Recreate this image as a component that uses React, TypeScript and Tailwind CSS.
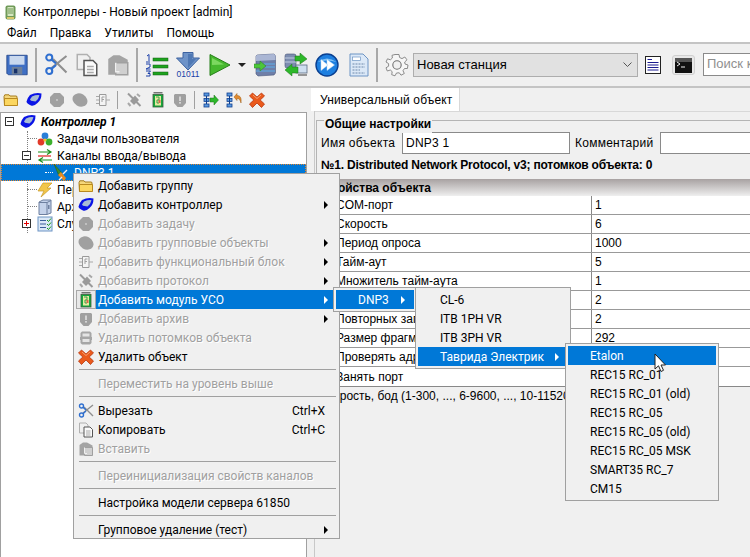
import type { ReactNode } from 'react';

const ui = 'font-["Roboto","Noto_Sans",sans-serif]';

const Svg = ({ size = 16, children, className = '' }: { size?: number; children: ReactNode; className?: string }) => (
  <svg width={size} height={size} viewBox="0 0 16 16" className={`shrink-0 ${className}`}>{children}</svg>
);

const FolderIcon = () => (
  <Svg>
    <path d="M1 4.5 L1.8 2.8 H6 L7 4 H13.5 L14 5 V13.5 H1.5 Z" fill="#f4d67a" stroke="#a67c1e" />
    <path d="M1.5 6.5 H14.5 V13.5 H1.5 Z" fill="#fbd65f" stroke="#b8891f" />
  </Svg>
);
const ControllerIcon = ({ size = 16 }: { size?: number }) => (
  <Svg size={size}>
    <path d="M4 3 Q10 0 15.5 1.5 Q15.5 8 11.5 11 Q8 14.5 5 13.5 Q0.5 11.5 0.5 9.5 Q2 5 4 3 Z" fill="#0a14e6" />
    <path d="M6 4.5 Q10 2.8 13.5 3.2 Q12.5 7.5 9.5 9.5 L5 8.8 L4 7.5 Z" fill="#a8bcd4" />
  </Svg>
);
const GrayBlob = ({ wide = false }: { wide?: boolean }) => (
  <Svg>
    {wide ? <ellipse cx="8" cy="8" rx="7.8" ry="6.3" fill="#a0a0a0" transform="rotate(30 8 8)" /> : <path d="M5 1 H11 L15 5 V11 L11 15 H5 L1 11 V5 Z" fill="#a0a0a0" />}
    {!wide && <circle cx="8" cy="8" r="0.9" fill="#d0d0d0" />}
  </Svg>
);
const BlockIcon = () => (
  <Svg>
    <path d="M4.5 2.5 H11 V13.5 H4.5 Z" fill="#f4f4f4" stroke="#9a9a9a" />
    <path d="M1 4.5 H4 M1 8 H4 M1 11.5 H4 M11 8 H15" stroke="#a8a8a8" />
    <path d="M7 5 H9.5 M7 5 V10 M7 7.5 H9" stroke="#a0a0a0" />
  </Svg>
);
const ProtocolGray = () => (
  <Svg>
    <path d="M2 1.5 L14.5 14" stroke="#9a9a9a" strokeWidth="2" />
    <path d="M4 9 L9 3.5 L13 8 L8 13 Z" fill="#9a9a9a" />
    <path d="M11 2 L14 4.5 M2 11 L4.5 14" stroke="#a8a8a8" strokeWidth="2" />
  </Svg>
);
const ModuleIcon = () => (
  <Svg>
    <path d="M3.5 0.8 H12.5" stroke="#555" strokeWidth="1.2" />
    <rect x="3" y="2.5" width="10" height="12.5" fill="#14a83c" stroke="#3c5c3c" strokeWidth="0.8" />
    <rect x="5" y="4" width="6" height="9.5" fill="#e8e8a0" />
    <path d="M6 5 H9 V8 H7 V11 H9" stroke="#3aa04a" fill="none" />
    <rect x="8.5" y="8" width="2" height="3" fill="#d46a4a" />
  </Svg>
);
const ShieldGray = () => (
  <Svg>
    <path d="M3 2 H13 L14 3 V11 L10.5 15 H5.5 L2 11 V3 Z" fill="#a0a0a0" />
    <rect x="7.2" y="4.5" width="1.6" height="4.5" fill="#e2e2e2" />
    <rect x="7.2" y="10" width="1.6" height="1.6" fill="#e2e2e2" />
  </Svg>
);
const DeleteChildrenGray = () => (
  <Svg>
    <path d="M4 1.5 H12 L13.5 3 V7 H14 V10 H13.5 V13 L12 14.5 H4 L2.5 13 V10 H2 V7 H2.5 V3 Z" fill="#a6a6a6" />
    <rect x="4.5" y="3.5" width="7" height="3" fill="#e4e4e4" />
    <rect x="4.5" y="9" width="7" height="3" fill="#e4e4e4" />
  </Svg>
);
const CrossIcon = ({ size = 16 }: { size?: number }) => (
  <Svg size={size}>
    <path d="M3.5 1 L8 5 L12.5 1 L15.5 4 L11.2 8 L15.5 12 L12.5 15.5 L8 11 L3.5 15.5 L0.5 12 L4.8 8 L0.5 4 Z" fill="#ea5a1c" stroke="#b8360c" strokeWidth="0.8" />
    <path d="M4 3 L8 6.5 L12 3" fill="none" stroke="#f7a070" />
  </Svg>
);
const ScissorsIcon = ({ size = 16 }: { size?: number }) => (
  <Svg size={size}>
    <path d="M15 2 L5 10 M15 13 L6 4" stroke="#8f8f8f" strokeWidth="1.4" />
    <circle cx="3.5" cy="3" r="2" fill="none" stroke="#2f6fd0" strokeWidth="1.4" />
    <circle cx="3.5" cy="12" r="2" fill="none" stroke="#2f6fd0" strokeWidth="1.4" />
    <path d="M5 4.3 L8 7 M5 10.7 L8 8" stroke="#2f6fd0" strokeWidth="1.4" />
  </Svg>
);
const CopyIcon = ({ size = 16 }: { size?: number }) => (
  <Svg size={size}>
    <path d="M1.5 1 H8 L10 3 V11 H1.5 Z" fill="#f0f0f0" stroke="#b0b0b0" />
    <path d="M6 5 H12 L14.5 7.5 V15 H6 Z" fill="#fafafa" stroke="#555" />
    <path d="M8 9 H12.5 M8 11 H12.5 M8 13 H12.5" stroke="#aaa" />
  </Svg>
);
const PasteGray = ({ size = 16 }: { size?: number }) => (
  <Svg size={size}>
    <path d="M1.5 14.5 V4 L5 1.5 H9 L14.5 4.5 V14.5 Z" fill="#a4a4a4" />
    <path d="M6.5 6.5 H14.5 V14.5 H6.5 Z" fill="#d0d0d0" stroke="#a0a0a0" />
    <path d="M6.5 6.5 V12.5 H9" fill="none" stroke="#f0f0f0" />
  </Svg>
);
const SaveIcon = () => (
  <Svg size={24}>
    <path d="M1.2 1.5 H14.8 V14.5 H2.2 L1.2 13.5 Z" fill="#3f6fc4" stroke="#1f3f80" strokeWidth="0.5" />
    <rect x="3" y="2" width="10" height="5.8" fill="#c9d8ee" />
    <rect x="4.5" y="9.3" width="7" height="5" fill="#6d7f99" />
    <rect x="6" y="10.5" width="2.2" height="3" fill="#16306a" />
  </Svg>
);
const NumberedIcon = () => (
  <svg width="24" height="24" viewBox="0 0 24 24" className="shrink-0">
    <rect x="8" y="5" width="15" height="3" fill="#1ea31e" stroke="#135c13" strokeWidth="0.5" />
    <rect x="8" y="12" width="15" height="3" fill="#1ea31e" stroke="#135c13" strokeWidth="0.5" />
    <rect x="8" y="19" width="15" height="3" fill="#1ea31e" stroke="#135c13" strokeWidth="0.5" />
    <path d="M2 3 L4 1.5 V8 M1 9 H5 M1 11 H5 V14 L1 16 H5.5 M1 18 H5.5 L3 20.5 H5 V23 H1" fill="none" stroke="#1a3fa8" strokeWidth="1" />
  </svg>
);
const DownloadIcon = () => (
  <svg width="26" height="26" viewBox="0 0 26 26" className="shrink-0">
    <path d="M8 0.5 H18 V6 H24.5 L13 18 L1.5 6 H8 Z" fill="#6e93c8" stroke="#3c62a0" />
    <path d="M13 2 H17 V7 H21 L13 16 Z" fill="#4f78b4" />
    <text x="13" y="25" textAnchor="middle" fontSize="8.5" fill="#1a3fa8" fontFamily="Liberation Sans, sans-serif">01011</text>
  </svg>
);
const PlayIcon = () => (
  <svg width="22" height="24" viewBox="0 0 22 24" className="shrink-0">
    <path d="M1 1.5 L21 12 L1 22.5 Z" fill="#46b82e" stroke="#27801a" />
    <path d="M3 5 L15 11.5 L3 12 Z" fill="#7cd860" />
  </svg>
);
const DatabaseArrow = () => (
  <svg width="22" height="24" viewBox="0 0 22 24" className="shrink-0">
    <path d="M3 2 L20 1 L21.5 3 V20 L20 22 L4 23 L2 21 V3 Z" fill="#6f7fa8" stroke="#4a5578" strokeWidth="0.6" />
    <path d="M3 2 L20 1 L21.5 3 V7 L2 8 V3 Z" fill="#aab6d4" />
    <path d="M10 11 H21 M10 14 H21 M2 18 H21" stroke="#5fb0ea" />
    <path d="M0 11 H6 V8 L12 13 L6 18 V15 H0 Z" fill="#4cc63a" stroke="#2a7d20" strokeWidth="0.5" />
  </svg>
);
const SyncIcon = () => (
  <svg width="24" height="25" viewBox="0 0 24 25" className="shrink-0">
    <rect x="1" y="1" width="11" height="14" rx="2" fill="#7d8db0" stroke="#4a5578" strokeWidth="0.6" />
    <path d="M1 5 H12 M1 9 H12" stroke="#c2cde2" />
    <rect x="12" y="12" width="11" height="8" fill="#cfdff0" stroke="#5a6a80" strokeWidth="0.8" />
    <path d="M14 22 H23" stroke="#777" strokeWidth="1.5" />
    <path d="M11 3 H16 L16 0 L23 6 L16 11 V8 H11 Z" fill="#2db82a" stroke="#1c701a" strokeWidth="0.5" />
    <path d="M14 14 H8 V11 L1 17 L8 23 V20 H14 Z" fill="#2db82a" stroke="#1c701a" strokeWidth="0.5" />
  </svg>
);
const ForwardIcon = () => (
  <svg width="24" height="24" viewBox="0 0 24 24" className="shrink-0">
    <circle cx="12" cy="12" r="11" fill="#1d7fe0" stroke="#0a3f90" strokeWidth="1.4" />
    <path d="M2.5 9 Q12 2 21.5 9 Q12 6 2.5 9" fill="#7fc0f5" />
    <path d="M6 6.5 L13 12 L6 17.5 Z M12 6.5 L19.5 12 L12 17.5 Z" fill="#fff" stroke="#bcdcf6" strokeWidth="0.5" />
  </svg>
);
const DocIcon = () => (
  <svg width="20" height="24" viewBox="0 0 20 24" className="shrink-0">
    <path d="M1 1 H14 L19 6 V23 H1 Z" fill="#dbe8f7" stroke="#6d94c4" />
    <rect x="3.5" y="4" width="8" height="3.5" fill="#fff" stroke="#6d94c4" strokeWidth="0.7" />
    <path d="M3.5 11 H16 M3.5 14 H16 M3.5 17 H11 M3.5 20 H16" stroke="#6d88aa" strokeDasharray="2 1" />
  </svg>
);
const GearIcon = () => (
  <svg width="24" height="24" viewBox="0 0 24 24" className="shrink-0">
    <path d="M10 1.5 H14 L14.6 4.5 L17 5.6 L19.8 4 L22 6.8 L19.7 9 L20 11 L23 12 L22.4 15.5 L19.5 15.5 L18 17.7 L19.3 20.5 L16 22.2 L14.3 19.8 L11.5 20 L10 22.8 L6.7 21.7 L7.2 18.7 L5.3 17 L2.3 18 L1 14.8 L3.6 13.2 L3.6 10.6 L1 9 L2.5 5.8 L5.4 6.8 L7.4 5 L7 2.3 Z" fill="#f6f6f6" stroke="#808080" strokeWidth="0.9" />
    <circle cx="12" cy="12" r="4.2" fill="#f0f0f0" stroke="#707070" strokeWidth="1.1" />
  </svg>
);
const ListDocIcon = () => (
  <svg width="16" height="18" viewBox="0 0 16 18" className="shrink-0">
    <rect x="0.5" y="0.5" width="15" height="17" fill="#fff" stroke="#222" />
    <path d="M2.5 3.5 H7 M2.5 6.5 H13.5 M2.5 9 H13.5 M2.5 11.5 H13.5 M2.5 14 H13.5" stroke="#1a1a90" strokeWidth="1.2" />
  </svg>
);
const TerminalIcon = () => (
  <div className="flex h-[20px] w-[23px] shrink-0 items-center justify-center rounded-[3px] border border-[#d0d0d0] bg-[#e8e8e8]">
    <svg width="17" height="15" viewBox="0 0 17 15">
      <rect width="17" height="15" fill="#111" />
      <rect width="17" height="4" fill="#555" />
      <path d="M2 4 L5 6 L2 8 M6 9 H10" fill="none" stroke="#eee" />
    </svg>
  </div>
);
const TreeGo = ({ back = false }: { back?: boolean }) => (
  <Svg>
    <rect x="1" y="1" width="5" height="3" fill="#5a9ae0" stroke="#103f90" strokeWidth="0.8" />
    <rect x="1" y="6.5" width="5" height="3" fill="#5a9ae0" stroke="#103f90" strokeWidth="0.8" />
    <rect x="1" y="12" width="5" height="3" fill="#5a9ae0" stroke="#103f90" strokeWidth="0.8" />
    <path d="M3.5 4 V12" stroke="#103f90" />
    {back ? (
      <path d="M8 5 L11 1.5 V3.5 C15 3.5 15.5 7 15 11 C14 7.5 13 6.5 11 6.5 V8.5 Z" fill="#e08a30" stroke="#9a5a14" strokeWidth="0.5" />
    ) : (
      <path d="M7 6 H11 V3 L15.5 8 L11 13 V10 H7 Z" fill="#2db82a" stroke="#1c701a" strokeWidth="0.5" />
    )}
  </Svg>
);
const TasksIcon = () => (
  <Svg>
    <circle cx="8" cy="5" r="3.4" fill="#2a7fd8" />
    <circle cx="4" cy="11" r="3.4" fill="#e23a2a" />
    <circle cx="12" cy="11" r="3.4" fill="#3cb02c" />
    <circle cx="8" cy="9" r="1.6" fill="#f0c030" />
  </Svg>
);
const ChannelsIcon = () => (
  <Svg>
    <path d="M1 4 H14 M10 1.5 L14 4 L10 6.5" fill="none" stroke="#1b8f1b" strokeWidth="1.2" />
    <path d="M1 8 H14" stroke="#e02020" strokeWidth="1.2" />
    <path d="M15 12 H2 M6 9.5 L2 12 L6 14.5" fill="none" stroke="#1b8f1b" strokeWidth="1.2" />
  </Svg>
);
const PlugIcon = () => (
  <svg width="18" height="18" viewBox="0 0 18 18" className="shrink-0">
    <path d="M1 0 L9 9 L6 12 Z" fill="#3f8a2e" stroke="#1f5a1a" strokeWidth="0.5" />
    <path d="M8 8 L13 14 L11 17 L5 11 Z" fill="#e88a1e" />
    <path d="M14 6 L10 10 M6 16 L9 13" stroke="#f0f0f0" strokeWidth="1.4" />
  </svg>
);
const BoltIcon = () => (
  <Svg>
    <path d="M6 1 H15 L10 6 H14 L4 15 L7 9 H1 Z" fill="#f2c64a" stroke="#c79a28" strokeWidth="0.7" />
  </Svg>
);
const ArchiveIcon = () => (
  <Svg>
    <path d="M2 3 L6 1 H14 V14 L10 15.5 H2 Z" fill="#c4d2ea" stroke="#6d7f9f" />
    <path d="M10 3.5 V15 M10 3.5 L2 3.5 M10 3.5 L14 1.5" stroke="#6d7f9f" />
    <rect x="11" y="6" width="1.5" height="4" fill="#6d7f9f" />
  </Svg>
);
const ChecklistIcon = () => (
  <Svg>
    <rect x="1" y="1" width="14" height="14" fill="#dbe8f7" stroke="#6d94c4" />
    <path d="M3 4.5 H9 M3 8 H9 M3 11.5 H9" stroke="#3a5f9a" />
    <path d="M10 4 L11.5 5.5 L14 2.5 M10 8 L11.5 9.5 L14 6.5 M10 12 L11.5 13.5 L14 10.5" fill="none" stroke="#1b9a1b" />
  </Svg>
);

const VDivider = ({ h }: { h: string }) => <div className={`mx-[1px] w-[2px] shrink-0 bg-[#a8a8a8] ${h}`} />;

const TreeBox = ({ open }: { open: boolean }) => (
  <span className="relative block h-[9px] w-[9px] shrink-0 border border-[#333] bg-white">
    <span className={`absolute left-[1px] top-[3px] h-[1px] w-[5px] ${open ? 'bg-[#333]' : 'bg-[#e00000]'}`} />
    {!open && <span className="absolute left-[3px] top-[1px] h-[5px] w-[1px] bg-[#e00000]" />}
  </span>
);

const Dots = ({ w, light = false }: { w: string; light?: boolean }) => (
  <span className={`block h-0 shrink-0 border-t border-dotted ${light ? 'border-white' : 'border-[#808080]'} ${w}`} />
);

const Arrow = ({ color = 'border-l-black' }: { color?: string }) => (
  <span className={`h-0 w-0 border-y-[4px] border-l-[4px] border-y-transparent ${color}`} />
);

type MenuRow =
  | { sep: true }
  | { sep?: false; label: string; icon?: ReactNode; off?: boolean; sub?: boolean; hot?: boolean; keys?: string; framed?: boolean };

const mainMenu: MenuRow[] = [
  { label: 'Добавить группу', icon: <FolderIcon /> },
  { label: 'Добавить контроллер', icon: <ControllerIcon />, sub: true },
  { label: 'Добавить задачу', icon: <GrayBlob />, off: true },
  { label: 'Добавить групповые объекты', icon: <GrayBlob wide />, off: true, sub: true },
  { label: 'Добавить функциональный блок', icon: <BlockIcon />, off: true, sub: true },
  { label: 'Добавить протокол', icon: <ProtocolGray />, off: true, sub: true },
  { label: 'Добавить модуль УСО', icon: <ModuleIcon />, sub: true, hot: true, framed: true },
  { label: 'Добавить архив', icon: <ShieldGray />, off: true, sub: true },
  { label: 'Удалить потомков объекта', icon: <DeleteChildrenGray />, off: true },
  { label: 'Удалить объект', icon: <CrossIcon /> },
  { sep: true },
  { label: 'Переместить на уровень выше', off: true },
  { sep: true },
  { label: 'Вырезать', icon: <ScissorsIcon />, keys: 'Ctrl+X' },
  { label: 'Копировать', icon: <CopyIcon />, keys: 'Ctrl+C' },
  { label: 'Вставить', icon: <PasteGray />, off: true },
  { sep: true },
  { label: 'Переинициализация свойств каналов', off: true },
  { sep: true },
  { label: 'Настройка модели сервера 61850' },
  { sep: true },
  { label: 'Групповое удаление (тест)', sub: true },
];

function MainMenuRow({ row }: { row: MenuRow }) {
  if (row.sep) return <div className="mb-[4px] ml-[3px] mr-[1px] mt-[3px] h-[1px] shrink-0 bg-[#a0a0a0]" />;
  const tone = row.hot ? 'text-white' : row.off ? 'text-[#a0a0a0] [text-shadow:1px_1px_0_#fff]' : 'text-black';
  return (
    <div className="flex h-[19px] shrink-0 items-center">
      <span className={`flex h-[19px] w-[20px] shrink-0 items-center justify-center ${row.framed ? 'border border-[#a8a8a8] bg-[#e8e8e8]' : ''}`}>{row.icon}</span>
      <div className={`flex h-[19px] flex-1 items-center pl-[2px] pr-[9px] ${row.hot ? 'bg-[#0078d7]' : ''} ${tone}`}>
        <span className="flex-1 whitespace-nowrap">{row.label}</span>
        {row.keys && <span className="mr-[3px]">{row.keys}</span>}
        {row.sub && <Arrow color={row.hot ? 'border-l-white' : 'border-l-black'} />}
      </div>
    </div>
  );
}

const SubItem = ({ label, hot, sub, pad }: { label: string; hot?: boolean; sub?: boolean; pad: string }) => (
  <div className={`flex h-[19px] items-center pr-[9px] ${pad} ${hot ? 'bg-[#0078d7] text-white' : 'text-black'}`}>
    <span className="flex-1 whitespace-nowrap">{label}</span>
    {sub && <Arrow color="border-l-white" />}
  </div>
);

const properties = [
  ['COM-порт', '1'],
  ['Скорость', '6'],
  ['Период опроса', '1000'],
  ['Тайм-аут', '5'],
  ['Множитель тайм-аута', '1'],
  ['Кол-во повторов', '2'],
  ['Повторных запросов', '2'],
  ['Размер фрагмента', '292'],
  ['Проверять адрес', ''],
  ['Занять порт', ''],
];

export default function App() {
  return (
    <div className="relative h-[557px] w-[750px] overflow-hidden bg-[#f0f0f0] font-['Liberation_Sans',sans-serif] text-[12px] text-black">
      {/* Title + menu */}
      <div className={`flex h-[24px] items-center bg-white pl-[5px] text-[12px] ${ui}`}>
        <svg width="11" height="15" viewBox="0 0 11 15" className="mr-[7px] shrink-0">
          <rect x="0.5" y="0.5" width="10" height="14" rx="2" fill="#6f9a58" />
          <rect x="2.5" y="2" width="6" height="9" fill="#d5e6c0" />
          <path d="M3 4 H8 M3 6 H8 M3 8 H8" stroke="#6f9a58" />
          <rect x="2" y="12" width="7" height="2" fill="#d8c86a" />
        </svg>
        <span>Контроллеры - Новый проект [admin]</span>
      </div>
      <div className={`flex h-[18px] items-center gap-[13px] bg-white pl-[7px] text-[12px] ${ui}`}>
        <span>Файл</span>
        <span>Правка</span>
        <span>Утилиты</span>
        <span>Помощь</span>
      </div>

      {/* Main toolbar */}
      <div className="flex h-[46px] items-center overflow-hidden border-y-2 border-y-[#c4c4c4] bg-[#f0f0f0] pl-[5px]">
        <SaveIcon />
        <div className="ml-[5px]"><VDivider h="h-[34px]" /></div>
        <div className="ml-[6px]"><ScissorsIcon size={24} /></div>
        <div className="ml-[7px]"><CopyIcon size={24} /></div>
        <div className="ml-[7px]"><PasteGray size={24} /></div>
        <div className="ml-[5px]"><VDivider h="h-[34px]" /></div>
        <div className="ml-[6px]"><NumberedIcon /></div>
        <div className="ml-[6px]"><DownloadIcon /></div>
        <div className="ml-[8px]"><PlayIcon /></div>
        <span className="ml-[7px] mr-[8px] h-0 w-0 border-x-[4px] border-t-[4px] border-x-transparent border-t-[#222]" />
        <DatabaseArrow />
        <div className="ml-[8px]"><SyncIcon /></div>
        <div className="ml-[7px]"><ForwardIcon /></div>
        <div className="ml-[10px]"><DocIcon /></div>
        <div className="ml-[6px]"><VDivider h="h-[34px]" /></div>
        <div className="ml-[6px]"><GearIcon /></div>
        <div className="ml-[4px] flex h-[24px] w-[225px] shrink-0 items-center justify-between border border-[#adadad] bg-[#e1e1e1] pl-[3px] pr-[5px]">
          <span className="text-[13px]">Новая станция</span>
          <svg width="9" height="6" viewBox="0 0 9 6"><path d="M0.5 0.5 L4.5 4.5 L8.5 0.5" fill="none" stroke="#555" /></svg>
        </div>
        <div className="ml-[7px]"><ListDocIcon /></div>
        <div className="ml-[11px]"><TerminalIcon /></div>
        <div className="mb-[2px] ml-[8px] flex h-[23px] w-[60px] shrink-0 items-center border border-[#8a8a8a] bg-white pl-[3px] text-[13px] whitespace-nowrap text-[#8f8f8f]">Поиск к</div>
      </div>

      <div className="flex h-[469px]">
        {/* Left column */}
        <div className="flex w-[307px] shrink-0 flex-col">
          <div className="flex h-[24px] items-center pl-[3px]">
            <FolderIcon />
            <div className="ml-[7px]"><ControllerIcon /></div>
            <div className="ml-[7px]"><GrayBlob /></div>
            <div className="ml-[7px]"><GrayBlob wide /></div>
            <div className="ml-[7px]"><BlockIcon /></div>
            <div className="ml-[6px] h-[18px] w-[1px] bg-[#a0a0a0]" />
            <div className="ml-[8px]"><ProtocolGray /></div>
            <div className="ml-[8px]"><ModuleIcon /></div>
            <div className="ml-[6px]"><ShieldGray /></div>
            <div className="ml-[6px] h-[18px] w-[1px] bg-[#a0a0a0]" />
            <div className="ml-[8px]"><TreeGo /></div>
            <div className="ml-[7px]"><TreeGo back /></div>
            <div className="ml-[7px]"><CrossIcon /></div>
          </div>
          <div className={`relative flex-1 border border-b-0 border-[#a0a0a0] bg-white text-[12px] ${ui}`}>
            <span className="absolute left-[26px] top-[18px] h-[102px] border-l border-dotted border-[#808080]" />
            <div className="relative flex h-[17px] items-center pl-[4px]">
              <TreeBox open />
              <span className="ml-[6px]"><ControllerIcon /></span>
              <span className="ml-[5px] font-bold italic">Контроллер 1</span>
            </div>
            <div className="relative flex h-[17px] items-center pl-[26px]">
              <Dots w="w-[10px]" />
              <TasksIcon />
              <span className="ml-[4px]">Задачи пользователя</span>
            </div>
            <div className="relative flex h-[17px] items-center pl-[21px]">
              <TreeBox open />
              <span className="ml-[6px]"><ChannelsIcon /></span>
              <span className="ml-[4px]">Каналы ввода/вывода</span>
            </div>
            <div className="relative flex h-[17px] items-center border border-dotted border-[#e8842a] bg-[#0078d7] pl-[43px] text-white">
              <Dots w="w-[8px]" light />
              <PlugIcon />
              <span className="ml-[3px]">DNP3 1</span>
            </div>
            <div className="relative flex h-[17px] items-center pl-[26px]"><Dots w="w-[10px]" /><BoltIcon /><span className="ml-[4px]">Передача</span></div>
            <div className="relative flex h-[17px] items-center pl-[26px]"><Dots w="w-[10px]" /><ArchiveIcon /><span className="ml-[4px]">Архивы</span></div>
            <div className="relative flex h-[17px] items-center pl-[21px]">
              <TreeBox open={false} />
              <span className="ml-[6px]"><ChecklistIcon /></span>
              <span className="ml-[4px]">Службы</span>
            </div>
          </div>
        </div>

        {/* Splitter */}
        <div className="w-[8px] shrink-0 border-r border-[#c8c8c8]" />

        {/* Right column */}
        <div className="flex min-w-0 flex-1 flex-col">
          <div className="flex h-[24px] items-end border-b border-[#d8d8d8]">
            <div className="relative ml-[-4px] flex h-[23px] w-[149px] items-center border-r border-[#d8d8d8] bg-white pl-[9px] tracking-[0.15px]">Универсальный объект</div>
          </div>
          <div className="relative ml-[1px] mt-[8px] h-[59px] border-l border-t border-[#b4b4b4] pl-[4px] tracking-[0.25px]">
            <span className="absolute left-[7px] top-[-6px] bg-[#f0f0f0] px-[1px] font-bold tracking-normal">Общие настройки</span>
            <div className="flex h-[35px] items-center pt-[9px]">
              <span className="w-[81px] shrink-0">Имя объекта</span>
              <div className="flex h-[22px] w-[168px] shrink-0 items-center border border-[#8a8a8a] bg-white pl-[3px]">DNP3 1</div>
              <span className="ml-[5px] w-[85px] shrink-0">Комментарий</span>
              <div className="h-[22px] flex-1 border border-r-0 border-[#8a8a8a] bg-white" />
            </div>
            <div className="flex h-[18px] items-center font-bold whitespace-nowrap tracking-[-0.2px]">№1. Distributed Network Protocol, v3; потомков объекта: 0</div>
          </div>
          <div className="flex h-[17px] shrink-0 items-center bg-gradient-to-b from-[#a8a2a2] to-[#efefef] pl-[7px] font-bold whitespace-nowrap">Свойства объекта</div>
          <div className="border-b border-[#888] bg-white">
            {properties.map(([name, value]) => (
              <div key={name} className="flex h-[19px] items-center border-b border-[#999] last:border-b-0">
                <span className="w-[276px] shrink-0 whitespace-nowrap pl-[21px]">{name}</span>
                <span className="flex h-full flex-1 items-center border-l border-[#888] pl-[3px]">{value}</span>
              </div>
            ))}
          </div>
          <div className="pl-[4px] whitespace-nowrap">Скорость, бод (1-300, ..., 6-9600, ..., 10-115200)</div>
        </div>
      </div>

      {/* Context menu */}
      <div className={`absolute left-[73px] top-[173px] flex h-[366px] w-[267px] flex-col border border-[#a0a0a0] bg-[#f0f0f0] p-[2px] text-[12px] ${ui}`}>
        {mainMenu.map((row, i) => <MainMenuRow key={i} row={row} />)}
      </div>

      {/* DNP3 submenu */}
      <div className={`absolute left-[333px] top-[287px] w-[84px] border border-[#a0a0a0] bg-[#f0f0f0] p-[2px] text-[12px] ${ui}`}>
        <SubItem label="DNP3" hot sub pad="pl-[22px]" />
      </div>
      <div className={`absolute left-[415px] top-[287px] w-[156px] border border-[#a0a0a0] bg-[#f0f0f0] p-[2px] text-[12px] ${ui}`}>
        <SubItem label="CL-6" pad="pl-[22px]" />
        <SubItem label="ITB 1PH VR" pad="pl-[22px]" />
        <SubItem label="ITB 3PH VR" pad="pl-[22px]" />
        <SubItem label="Таврида Электрик" hot sub pad="pl-[22px]" />
      </div>
      <div className={`absolute left-[565px] top-[343px] w-[154px] border border-[#a0a0a0] bg-[#f0f0f0] p-[2px] text-[12px] ${ui}`}>
        {['Etalon', 'REC15 RC_01', 'REC15 RC_01 (old)', 'REC15 RC_05', 'REC15 RC_05 (old)', 'REC15 RC_05 MSK', 'SMART35 RC_7', 'CM15'].map((label, i) => (
          <SubItem key={label} label={label} hot={i === 0} pad="pl-[22px]" />
        ))}
      </div>

      {/* Mouse pointer */}
      <svg width="13" height="21" viewBox="0 0 13 21" className="absolute left-[654px] top-[353px]">
        <path d="M1 1 V16 L4.5 12.8 L7 18.5 L9.5 17.3 L7 12 H11.5 Z" fill="#fff" stroke="#222" strokeWidth="1" />
      </svg>
    </div>
  );
}
